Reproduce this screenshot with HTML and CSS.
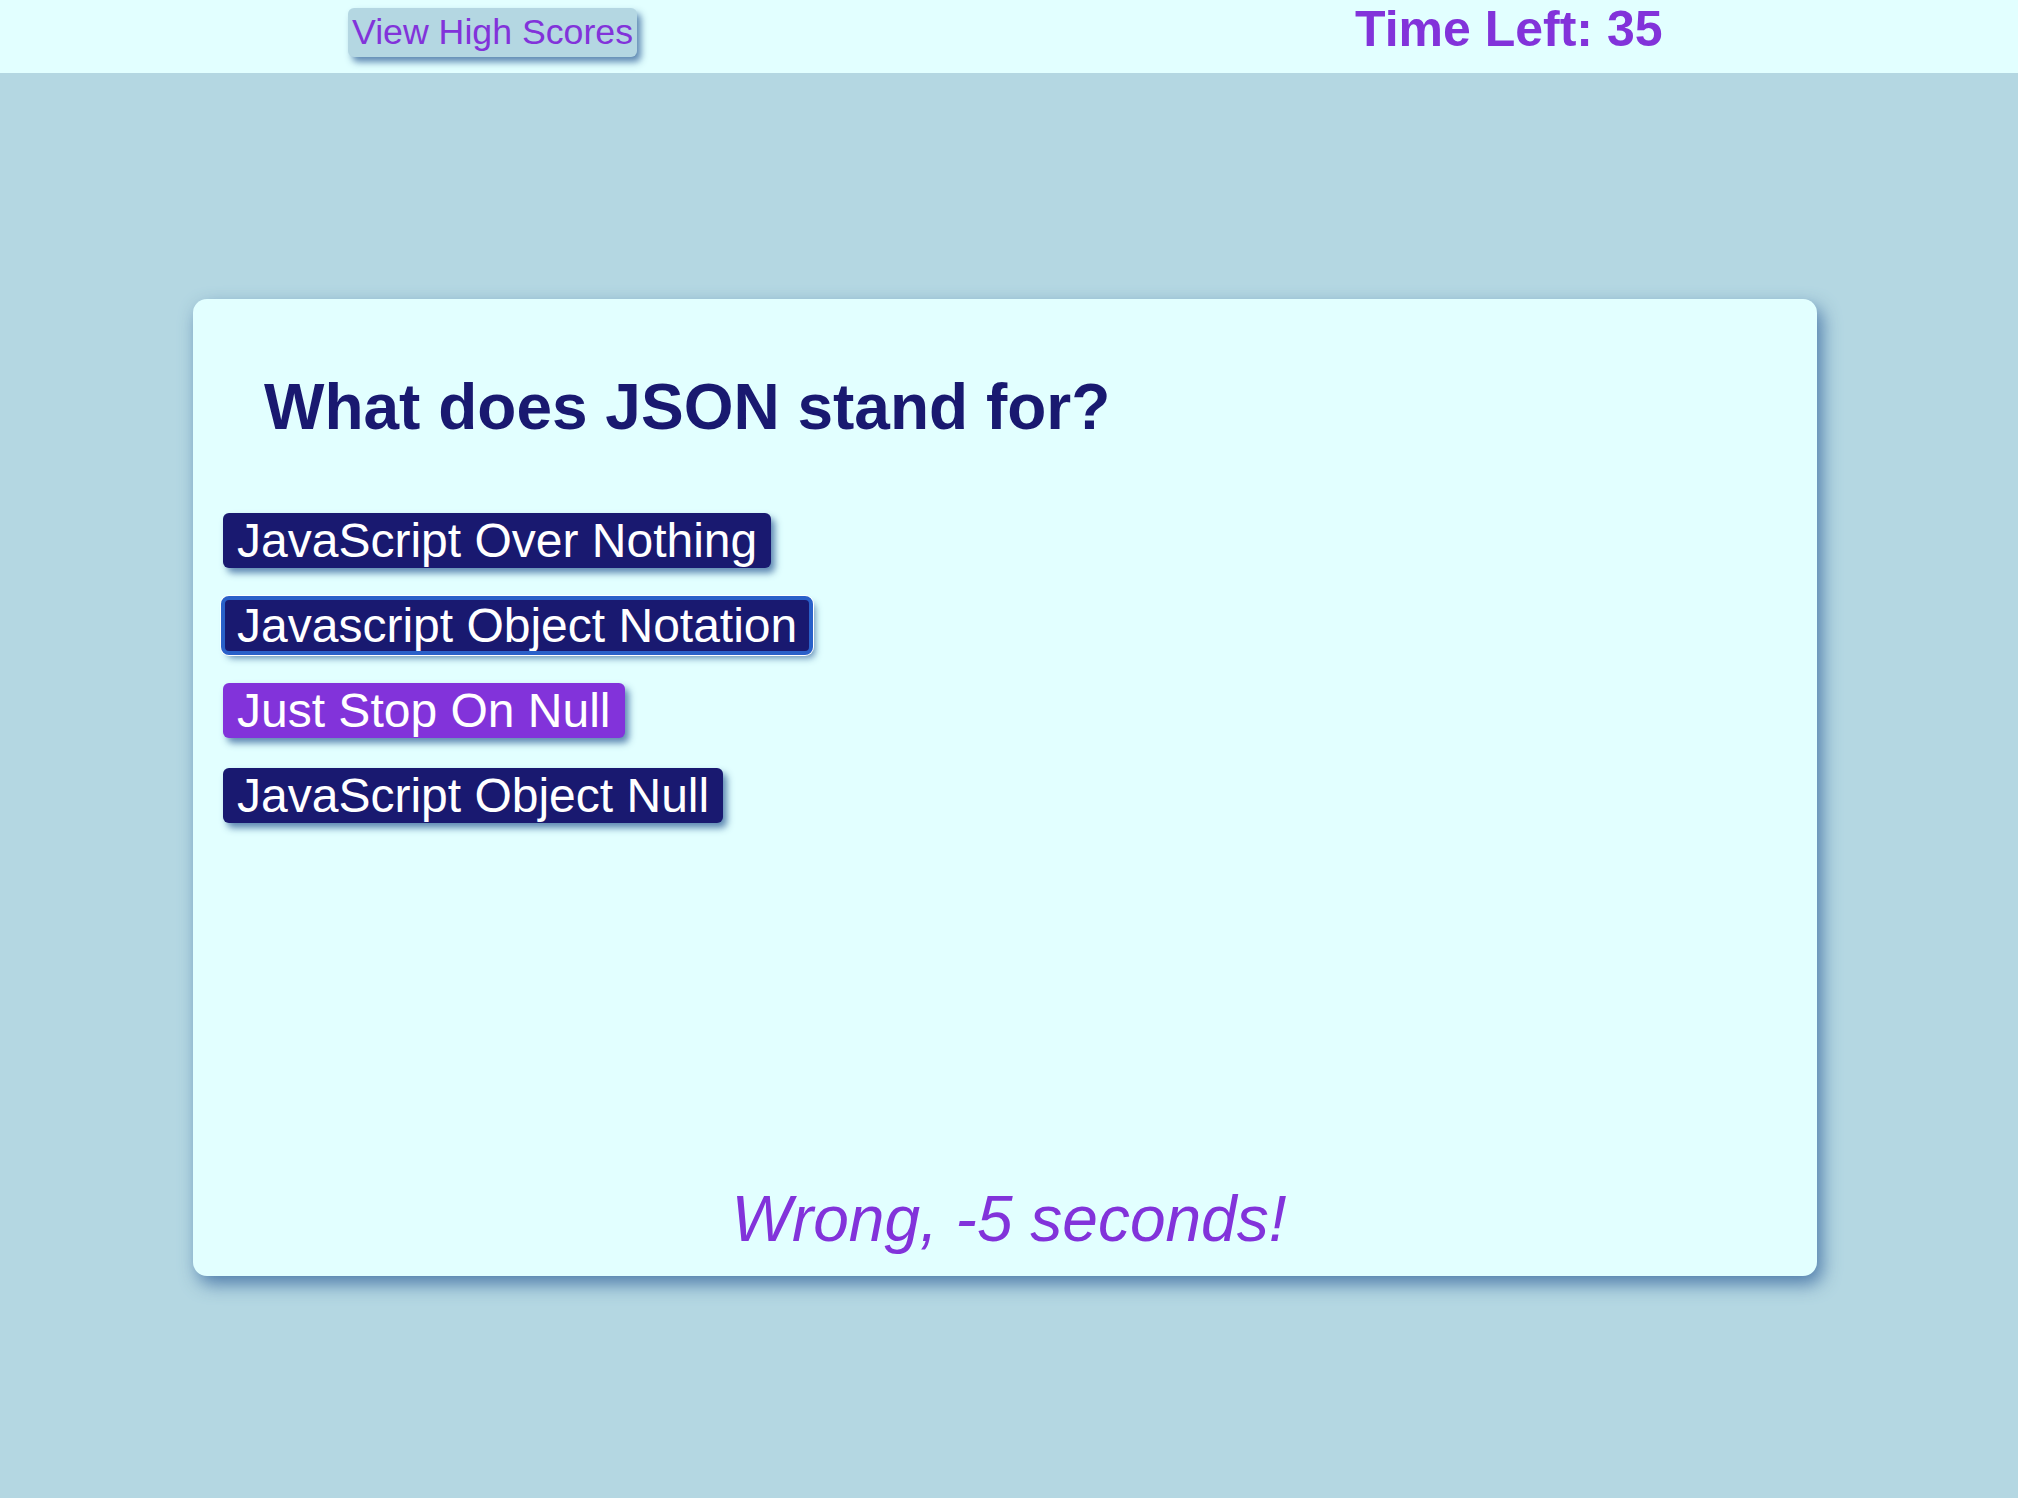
FILE: index.html
```html
<!DOCTYPE html>
<html lang="en">
<head>
<meta charset="utf-8">
<title>Code Quiz</title>
<link rel="stylesheet" href="styles.css">
</head>
<body>
<header class="top-bar">
  <button class="scores-btn">View High Scores</button>
  <div class="timer">Time Left: 35</div>
</header>
<main class="stage">
  <section class="quiz-card">
    <h1 class="question">What does JSON stand for?</h1>
    <div class="answers">
      <button class="answer">JavaScript Over Nothing</button>
      <button class="answer focused">Javascript Object Notation</button>
      <button class="answer picked">Just Stop On Null</button>
      <button class="answer">JavaScript Object Null</button>
    </div>
    <p class="feedback">Wrong, -5 seconds!</p>
  </section>
</main>
</body>
</html>
```

FILE: styles.css
```css
* { box-sizing: border-box; }

html, body {
  margin: 0;
  padding: 0;
}

body {
  background: #b4d7e2;
  font-family: "Liberation Sans", Arial, Helvetica, sans-serif;
  min-height: 1498px;
}

.top-bar {
  height: 73px;
  background: #e2ffff;
  display: flex;
  align-items: flex-start;
}

.scores-btn {
  margin: 8px 0 0 348px;
  height: 49px;
  padding: 0 4px;
  border: none;
  border-radius: 6px;
  background: #b4d7e2;
  color: #8233da;
  font-family: inherit;
  font-size: 35.7px;
  line-height: 49px;
  box-shadow: 4px 5px 7px rgba(70, 115, 165, 0.85);
}

.timer {
  margin-left: 718px;
  font-size: 50px;
  font-weight: bold;
  line-height: 50px;
  color: #8233da;
  padding-top: 4px;
}

.stage {
  padding: 226px 0 0 193px;
}

.quiz-card {
  width: 1624px;
  height: 977px;
  background: #e2ffff;
  border-radius: 14px;
  box-shadow: 5px 8px 18px rgba(70, 115, 165, 0.9);
  padding: 71px 30px 20px 30px;
  display: flex;
  flex-direction: column;
}

.question {
  margin: 0 0 69px 41px;
  font-size: 64px;
  line-height: 74px;
  font-weight: bold;
  color: #191970;
}

.answers {
  display: flex;
  flex-direction: column;
  align-items: flex-start;
  gap: 30px;
}

.answer {
  height: 55px;
  padding: 0 14px;
  border: none;
  border-radius: 6px;
  background: #191970;
  color: #ffffff;
  font-family: inherit;
  font-size: 48px;
  line-height: 55px;
  box-shadow: 4px 5px 7px rgba(70, 115, 165, 0.85);
}

.answer.focused {
  outline: 4px solid #2a60c9;
  outline-offset: -2px;
  box-shadow: 0 0 0 3px #ffffff, 4px 5px 7px rgba(70, 115, 165, 0.85);
}

.answer.picked {
  background: #8233da;
}

.feedback {
  margin: auto 0 0 0;
  padding-left: 8px;
  text-align: center;
  font-size: 64px;
  line-height: 74px;
  font-style: italic;
  color: #8233da;
}
```
